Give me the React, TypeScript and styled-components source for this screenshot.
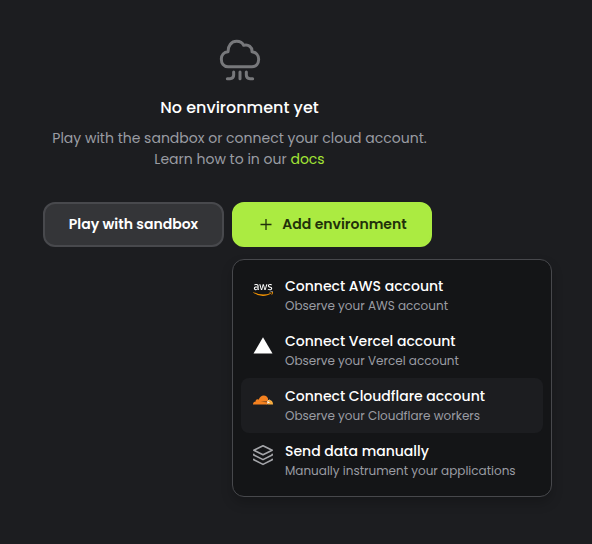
import React from "react";
import styled, { createGlobalStyle } from "styled-components";
import { FaAws } from "react-icons/fa6";

const GlobalStyle = createGlobalStyle`
  * { box-sizing: border-box; }
  body {
    margin: 0;
    background: #1c1d20;
    font-family: Poppins, Inter, sans-serif;
  }
`;

const Page = styled.main`
  width: 592px;
  height: 544px;
  overflow: hidden;
  background: #1c1d20;
`;

const EmptyState = styled.section`
  width: 479px;
  padding-top: 30px;
  display: flex;
  flex-direction: column;
  align-items: center;
  white-space: nowrap;
`;

const CloudIcon = styled.svg`
  display: block;
  width: 80px;
  height: 60px;
  margin-left: 1px;
  fill: none;
  stroke: #77787b;
  stroke-width: 9;
  stroke-linecap: round;
  stroke-linejoin: round;
`;

const Title = styled.h1`
  margin: 6px 0 0;
  font-size: 16px;
  line-height: 24px;
  font-weight: 500;
  color: #fff;
`;

const Description = styled.p`
  margin: 8px 0 0;
  font-size: 14px;
  line-height: 21px;
  text-align: center;
  color: #9a9ca3;
`;

const DocsLink = styled.a`
  color: #a3e635;
`;

const Actions = styled.div`
  display: flex;
  gap: 8px;
  margin: 32px 0 0 43px;
`;

const Button = styled.button<{ $primary?: boolean }>`
  display: flex;
  align-items: center;
  justify-content: center;
  gap: 8px;
  width: ${(p) => (p.$primary ? 200 : 181)}px;
  height: 45px;
  padding: 0 0 0 ${(p) => (p.$primary ? 1 : 0)}px;
  border: 2px solid ${(p) => (p.$primary ? "#abeb41" : "#48494d")};
  border-radius: 12px;
  background: ${(p) => (p.$primary ? "#abeb41" : "#343538")};
  color: ${(p) => (p.$primary ? "#22310a" : "#fff")};
  font: 600 14px/21px Poppins, Inter, sans-serif;
  white-space: nowrap;
`;

const PlusIcon = styled.svg`
  width: 16px;
  height: 16px;
  flex: none;
  stroke: currentColor;
  stroke-width: 1.3;
`;

const Menu = styled.ul`
  width: 320px;
  margin: 12px 0 0 232px;
  padding: 8px;
  list-style: none;
  border: 1px solid #47484c;
  border-radius: 12px;
  background: #141517;
  box-shadow: 0 6px 12px rgba(0, 0, 0, 0.2);
`;

const Item = styled.li<{ $active?: boolean }>`
  display: flex;
  gap: 10px;
  height: 55px;
  padding: 8px 10px 0;
  border-radius: 8px;
  background: ${(p) => (p.$active ? "#1c1d20" : "transparent")};
  white-space: nowrap;
`;

const ItemIcon = styled.span`
  display: flex;
  align-items: center;
  justify-content: center;
  width: 24px;
  height: 24px;
  margin-top: 2px;
  flex: none;
`;

const ItemTitle = styled.div`
  font-size: 14px;
  line-height: 21px;
  font-weight: 500;
  color: #fff;
`;

const ItemNote = styled.div`
  font-size: 12px;
  line-height: 18px;
  color: #9a9ca3;
`;

const AwsIcon = styled(FaAws)`
  width: 20px;
  height: 16px;
  path { fill: url(#awsFill); }
`;

const GlyphIcon = styled.svg`
  width: 24px;
  height: 24px;
  fill: #fff;
`;

const StackIcon = styled(GlyphIcon)`
  fill: none;
  stroke: #a5a6aa;
  stroke-width: 1.6;
  stroke-linecap: round;
  stroke-linejoin: round;
`;

const Gradients = styled.svg`
  display: block;
  width: 0;
  height: 0;
`;

const items = [
  { title: "Connect AWS account", note: "Observe your AWS account", icon: <AwsIcon /> },
  {
    title: "Connect Vercel account",
    note: "Observe your Vercel account",
    icon: <GlyphIcon viewBox="0 0 24 24"><path d="M12 4.2 21.5 20.5H2.5Z" /></GlyphIcon>,
  },
  {
    title: "Connect Cloudflare account",
    note: "Observe your Cloudflare workers",
    active: true,
    icon: (
      <GlyphIcon viewBox="0 0 24 24">
        <path d="M16.2 12.4 19 11.6 19.5 14.2 15.6 16.4Z" fill="#fff" />
        <path d="M17.5 12.1C20 11.8 22 13.4 22.1 16.2Q22.1 16.6 21.7 16.6H16.3L16.8 15.2 19.2 14.6Q19.6 14.1 18.8 13.9L17 13.8Z" fill="#faad3f" />
        <path d="M2 16.6C1.9 14.8 3 13.6 4.7 13.5C4.4 11.7 6.2 10.7 7.7 11.7C8.5 9.2 10.4 7.5 12.7 7.5C15 7.5 16.8 9 17.2 11.2L16.6 13.4 9.5 13.8 16.5 14.3Q16.6 15.8 15.8 16.6Z" fill="#f48120" />
      </GlyphIcon>
    ),
  },
  {
    title: "Send data manually",
    note: "Manually instrument your applications",
    icon: (
      <StackIcon viewBox="0 0 24 24">
        <path d="M12 2.7 21.2 7.2 12 11.7 2.8 7.2ZM2.8 11.4V12L12 16.6 21.2 12V11.4M2.8 16.2V16.8L12 21.4 21.2 16.8V16.2" />
      </StackIcon>
    ),
  },
];

export default function App() {
  return (
    <Page>
      <GlobalStyle />
      <Gradients>
        <defs>
          <linearGradient id="awsFill" x1="0" y1="0" x2="0" y2="1">
            <stop offset="0.64" stopColor="#fff" />
            <stop offset="0.64" stopColor="#f79400" />
          </linearGradient>
        </defs>
      </Gradients>
      <EmptyState>
        <CloudIcon viewBox="0 0 240 180">
          <path d="M84 110C71 110 64 100 64 87C64 75 72 66 84 65C84 47 94 34 110 34C120 34 127 38 131 46C145 42 157 51 156 65C168 67 176 76 176 88C176 101 168 110 156 110Z" />
          <path d="M101 126V135Q101 146 90 146H82M120 126V146M139 126V135Q139 146 150 146H158" />
        </CloudIcon>
        <Title>No environment yet</Title>
        <Description>
          Play with the sandbox or connect your cloud account.
          <br />
          Learn how to in our <DocsLink>docs</DocsLink>
        </Description>
      </EmptyState>
      <Actions>
        <Button>Play with sandbox</Button>
        <Button $primary>
          <PlusIcon viewBox="0 0 16 16"><path d="M8 2v11M2.5 7.5h11" /></PlusIcon>
          Add environment
        </Button>
      </Actions>
      <Menu>
        {items.map((item) => (
          <Item key={item.title} $active={item.active}>
            <ItemIcon>{item.icon}</ItemIcon>
            <div>
              <ItemTitle>{item.title}</ItemTitle>
              <ItemNote>{item.note}</ItemNote>
            </div>
          </Item>
        ))}
      </Menu>
    </Page>
  );
}
